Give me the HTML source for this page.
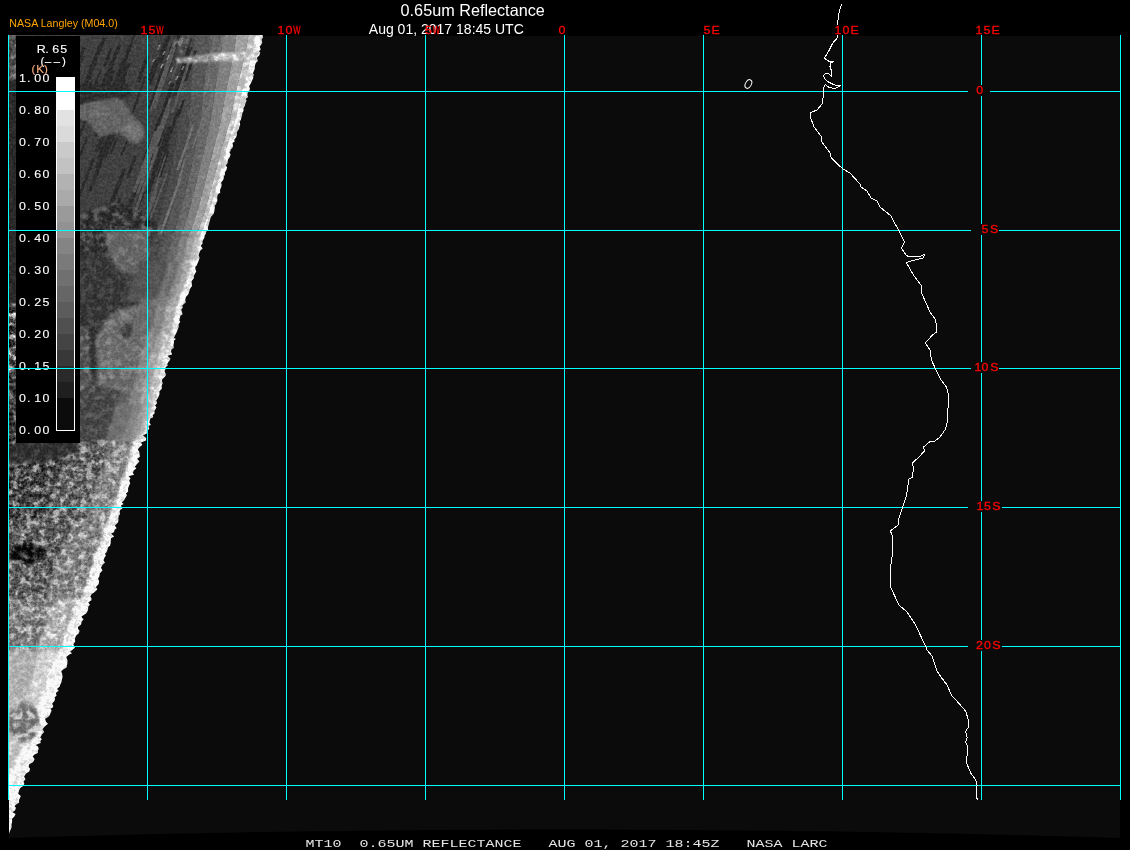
<!DOCTYPE html>
<html lang="en"><head><meta charset="utf-8"><title>0.65um Reflectance</title>
<style>
html,body{margin:0;padding:0;background:#000}
body{width:1130px;height:850px;overflow:hidden;position:relative}
svg{position:absolute;left:0;top:0;display:block}
.m{font-family:"Liberation Mono","DejaVu Sans Mono",monospace}
.s{font-family:"Liberation Sans",Arial,sans-serif}
text{filter:url(#gaa)}
</style></head><body>
<svg width="1130" height="850" viewBox="0 0 1130 850">
<g>
<rect width="1130" height="850" fill="#000"/>
<path d="M9.0 36.0 L1120.0 36.0 L1120.0 838.0 L1080.0 836.8 L1040.0 835.7 L1000.0 834.7 L960.0 833.8 L920.0 833.0 L880.0 832.2 L840.0 831.6 L800.0 831.0 L760.0 830.5 L720.0 830.2 L680.0 829.9 L640.0 829.7 L600.0 829.5 L560.0 829.5 L520.0 829.6 L480.0 829.7 L440.0 829.9 L400.0 830.2 L360.0 830.7 L320.0 831.2 L280.0 831.7 L240.0 832.4 L200.0 833.2 L160.0 834.0 L120.0 834.9 L80.0 836.0 L40.0 837.1 L9.0 838.0Z" fill="#0b0b0b"/>
<defs>
<filter id="gaa" x="-5%" y="-50%" width="110%" height="200%"><feOffset dx="0" dy="0"/></filter>
<clipPath id="bc"><path d="M9.0 35.0 L262.6 35.0 L263.0 37.6 L261.7 39.7 L262.3 42.5 L261.1 44.7 L259.7 46.4 L260.4 48.4 L260.6 49.7 L259.0 51.4 L260.3 52.6 L259.4 55.3 L257.0 57.8 L257.4 59.6 L258.0 61.0 L255.8 63.0 L254.9 65.8 L254.7 68.9 L253.8 71.2 L252.9 73.3 L253.9 74.6 L253.3 76.3 L253.2 77.9 L251.9 80.9 L250.8 83.6 L249.1 86.3 L249.9 88.4 L249.7 90.0 L247.8 93.0 L247.4 94.9 L248.1 96.9 L245.5 98.9 L246.6 100.3 L245.4 103.5 L244.9 105.6 L243.5 108.3 L243.6 110.8 L242.2 113.2 L242.2 114.7 L241.4 117.8 L240.7 120.2 L239.7 121.6 L240.2 124.4 L239.4 126.4 L239.0 128.9 L236.9 132.0 L237.0 135.2 L236.0 137.6 L234.2 139.8 L234.7 141.5 L232.5 143.0 L233.0 145.8 L232.4 148.0 L230.8 149.3 L230.6 151.1 L229.4 152.6 L230.6 154.5 L229.5 157.6 L227.9 159.8 L227.6 162.9 L225.8 165.6 L227.1 167.2 L226.4 170.0 L224.8 172.4 L225.0 174.8 L223.9 176.6 L223.9 178.3 L223.4 179.6 L221.1 182.7 L221.8 185.0 L220.9 187.9 L220.0 189.7 L220.2 192.8 L218.1 194.2 L217.5 195.6 L217.2 197.7 L217.4 200.7 L216.7 202.1 L216.1 204.0 L214.9 205.6 L214.9 207.2 L214.5 209.8 L214.4 211.1 L213.5 214.0 L211.0 216.8 L210.3 218.9 L209.6 221.7 L208.9 224.3 L208.1 226.9 L207.8 228.2 L208.3 230.0 L206.2 231.8 L205.7 234.1 L204.6 235.5 L204.4 237.7 L202.6 240.8 L202.6 243.4 L200.7 245.7 L202.7 248.6 L200.4 250.5 L199.0 253.7 L198.5 255.0 L199.7 257.9 L198.8 259.9 L198.5 261.2 L197.6 263.3 L196.8 265.3 L195.3 266.9 L195.4 269.0 L196.3 271.6 L194.6 274.2 L193.9 275.9 L194.0 278.1 L191.5 281.2 L191.8 283.4 L192.0 286.0 L190.1 288.8 L189.2 291.5 L188.2 294.4 L185.9 297.0 L185.3 300.0 L185.7 302.4 L182.3 305.6 L182.8 307.4 L181.2 309.7 L182.2 312.8 L182.5 314.2 L180.4 315.8 L179.7 318.4 L179.3 320.2 L180.3 321.8 L178.6 324.2 L178.6 327.2 L177.6 329.7 L177.0 331.6 L175.5 334.8 L174.0 337.8 L175.9 339.1 L173.7 340.8 L174.1 342.2 L173.4 345.2 L173.8 347.9 L171.6 349.2 L171.0 351.5 L172.1 354.4 L167.4 355.7 L170.4 358.4 L170.1 359.7 L168.4 362.1 L167.2 364.0 L167.7 365.8 L165.7 367.1 L165.3 369.7 L164.5 371.0 L165.5 373.6 L166.0 375.0 L164.7 377.0 L162.3 379.2 L161.8 380.9 L162.8 383.1 L161.7 385.8 L161.8 388.7 L159.4 391.2 L159.5 394.2 L158.2 397.4 L156.3 400.4 L157.2 402.9 L155.1 405.4 L156.5 407.6 L154.5 410.8 L154.6 413.5 L152.7 414.9 L153.2 417.2 L150.4 418.6 L149.7 421.0 L149.4 422.6 L150.9 424.8 L148.5 426.3 L149.3 428.8 L147.0 431.3 L147.0 433.2 L143.0 435.5 L146.2 437.9 L146.0 440.5 L141.0 442.5 L142.4 444.9 L140.2 446.5 L137.8 449.3 L139.4 452.2 L139.5 454.1 L140.0 456.7 L137.1 458.7 L139.4 461.5 L136.6 464.4 L134.8 466.8 L136.4 468.6 L133.9 470.2 L132.9 472.8 L134.0 474.7 L128.5 476.3 L130.5 478.3 L129.2 480.8 L130.2 483.2 L128.8 486.3 L128.0 488.8 L128.2 491.5 L125.8 493.7 L127.1 495.0 L126.2 496.6 L125.3 498.0 L123.6 500.8 L121.8 502.4 L123.7 503.9 L120.9 505.6 L121.6 507.0 L122.4 508.6 L120.1 510.0 L119.6 511.4 L120.1 514.2 L118.9 515.4 L118.3 518.4 L118.6 519.7 L118.0 522.5 L114.9 525.5 L116.7 528.3 L114.6 529.8 L114.0 532.3 L111.0 533.6 L114.2 536.4 L111.0 538.2 L110.8 540.3 L110.7 543.2 L110.0 545.7 L107.9 547.6 L107.6 549.4 L106.4 552.4 L104.9 553.7 L105.9 555.6 L104.3 558.1 L103.5 560.3 L104.9 562.7 L102.4 564.9 L101.0 567.8 L102.5 570.5 L99.7 573.5 L99.6 575.3 L99.1 576.9 L98.0 578.6 L99.1 581.0 L98.7 584.0 L96.0 587.1 L97.3 589.4 L95.2 591.4 L93.4 592.9 L91.7 594.1 L90.3 596.8 L91.5 598.3 L91.4 600.3 L88.4 602.3 L89.9 604.9 L88.3 606.6 L88.1 609.2 L87.6 611.1 L86.1 613.6 L81.5 616.4 L82.2 617.9 L83.6 619.2 L81.7 621.5 L81.1 624.4 L78.0 627.1 L78.1 628.9 L79.7 630.9 L78.6 633.6 L76.2 635.5 L74.9 638.4 L75.2 641.4 L73.3 644.2 L75.0 647.4 L73.7 648.7 L70.1 651.8 L72.1 653.2 L69.4 654.5 L66.2 656.9 L67.4 660.1 L67.4 662.0 L67.3 664.1 L66.7 665.9 L66.8 667.2 L63.6 669.2 L61.3 671.1 L61.6 672.4 L62.2 674.1 L62.6 677.0 L61.9 679.7 L61.4 682.2 L60.1 684.9 L59.7 686.6 L57.0 688.9 L58.7 690.6 L55.9 692.9 L56.6 695.8 L54.6 697.2 L55.1 698.8 L54.4 701.1 L52.1 703.8 L53.3 705.9 L52.7 707.6 L50.6 708.8 L51.6 710.4 L50.4 713.5 L49.5 715.6 L48.2 717.0 L45.0 718.8 L46.2 722.0 L48.0 723.8 L44.7 726.6 L42.6 729.2 L44.2 732.1 L41.9 734.5 L40.2 737.4 L41.9 738.9 L40.3 741.0 L40.7 742.9 L35.6 745.1 L38.0 746.6 L38.8 748.9 L37.9 750.2 L37.8 752.9 L34.5 754.6 L32.7 756.5 L34.6 759.0 L33.2 762.0 L29.0 764.4 L28.7 767.1 L30.1 768.8 L29.3 771.6 L26.0 773.5 L24.1 776.5 L25.5 779.3 L23.5 781.4 L24.4 783.9 L23.1 786.1 L20.2 787.9 L19.0 790.7 L18.2 793.8 L20.8 796.0 L19.9 798.2 L19.1 799.7 L19.0 802.8 L15.4 804.9 L14.6 806.5 L16.0 807.8 L15.0 810.4 L12.5 812.2 L15.6 813.9 L14.4 816.5 L12.1 818.7 L12.1 820.6 L12.1 821.9 L11.4 825.0 L11.7 826.9 L10.4 829.9 L9.5 832.3 L9.0 834.0Z"/></clipPath>
<filter id="tex" x="0" y="30" width="280" height="815" filterUnits="userSpaceOnUse" color-interpolation-filters="sRGB">
<feGaussianBlur in="SourceGraphic" stdDeviation="0.5" result="sg"/>
<feColorMatrix in="sg" type="matrix" values="1 0 0 0 0 1 0 0 0 0 1 0 0 0 0 0 0 0 0 1" result="base"/>
<feColorMatrix in="sg" type="matrix" values="0 1 0 0 0 0 1 0 0 0 0 1 0 0 0 0 0 0 0 1" result="amp"/>
<feTurbulence type="fractalNoise" baseFrequency="0.15" numOctaves="4" seed="5" result="tn"/>
<feColorMatrix in="tn" type="matrix" values="2.4 0 0 0 -0.7 2.4 0 0 0 -0.7 2.4 0 0 0 -0.7 0 0 0 0 1" result="N0"/>
<feComponentTransfer in="N0" result="N"><feFuncR type="gamma" exponent="1.8"/><feFuncG type="gamma" exponent="1.8"/><feFuncB type="gamma" exponent="1.8"/></feComponentTransfer>
<feComposite in="amp" in2="N" operator="arithmetic" k1="1" k2="0" k3="0" k4="0" result="T"/>
<feComposite in="T" in2="amp" operator="arithmetic" k1="0" k2="1" k3="-0.35" k4="0.5" result="X"/>
<feComposite in="base" in2="X" operator="arithmetic" k1="0" k2="1" k3="1.0" k4="-0.5" result="R"/>
<feColorMatrix in="sg" type="matrix" values="0 0 1 0 0 0 0 1 0 0 0 0 1 0 0 0 0 0 0 1" result="amp2"/>
<feTurbulence type="fractalNoise" baseFrequency="0.38" numOctaves="2" seed="11" result="tn2"/>
<feColorMatrix in="tn2" type="matrix" values="3 0 0 0 -1 3 0 0 0 -1 3 0 0 0 -1 0 0 0 0 1" result="N2"/>
<feComposite in="amp2" in2="N2" operator="arithmetic" k1="1" k2="0" k3="0" k4="0" result="T2"/>
<feComposite in="T2" in2="amp2" operator="arithmetic" k1="0" k2="1" k3="-0.5" k4="0.5" result="X2"/>
<feComposite in="R" in2="X2" operator="arithmetic" k1="0" k2="1" k3="0.6" k4="-0.3" result="R2"/>
<feComponentTransfer in="R2"><feFuncR type="discrete" tableValues="0.021 0.062 0.104 0.146 0.188 0.229 0.271 0.312 0.354 0.396 0.438 0.479 0.521 0.562 0.604 0.646 0.688 0.729 0.771 0.812 0.854 0.896 0.938 0.979"/><feFuncG type="discrete" tableValues="0.021 0.062 0.104 0.146 0.188 0.229 0.271 0.312 0.354 0.396 0.438 0.479 0.521 0.562 0.604 0.646 0.688 0.729 0.771 0.812 0.854 0.896 0.938 0.979"/><feFuncB type="discrete" tableValues="0.021 0.062 0.104 0.146 0.188 0.229 0.271 0.312 0.354 0.396 0.438 0.479 0.521 0.562 0.604 0.646 0.688 0.729 0.771 0.812 0.854 0.896 0.938 0.979"/></feComponentTransfer>
</filter>
<filter id="b1" x="0" y="30" width="280" height="450" filterUnits="userSpaceOnUse" color-interpolation-filters="sRGB"><feGaussianBlur stdDeviation="1.1"/></filter>
<filter id="b3" x="0" y="200" width="280" height="650" filterUnits="userSpaceOnUse" color-interpolation-filters="sRGB"><feGaussianBlur stdDeviation="1.4"/></filter>
</defs>
<g clip-path="url(#bc)"><g filter="url(#tex)">
<rect x="0" y="30" width="280" height="815" fill="rgb(64,5,30)"/>
<path d="M179.3 30.0 L179.4 35.0 L179.7 55.0 L179.5 60.0 L178.3 90.0 L178.3 91.0 L178.0 120.0 L175.3 150.0 L166.9 190.0 L162.3 210.0 L156.7 230.0 L154.2 234.0 L152.4 245.0 L0.0 245.0 L0.0 234.0 L0.0 230.0 L0.0 210.0 L0.0 190.0 L0.0 150.0 L0.0 120.0 L0.0 91.0 L0.0 90.0 L0.0 60.0 L0.0 55.0 L0.0 35.0 L0.0 30.0Z" fill="rgb(64,5,30)"/>
<path d="M194.5 30.0 L194.4 35.0 L193.8 55.0 L193.4 60.0 L191.0 90.0 L190.9 91.0 L189.3 120.0 L185.3 150.0 L176.4 190.0 L171.7 210.0 L165.8 230.0 L163.3 234.0 L161.4 245.0 L152.4 245.0 L154.2 234.0 L156.7 230.0 L162.3 210.0 L166.9 190.0 L175.3 150.0 L178.0 120.0 L178.3 91.0 L178.3 90.0 L179.5 60.0 L179.7 55.0 L179.4 35.0 L179.3 30.0Z" fill="rgb(74,5,30)"/>
<path d="M209.8 30.0 L209.4 35.0 L208.0 55.0 L207.4 60.0 L203.6 90.0 L203.5 91.0 L200.7 120.0 L195.3 150.0 L186.0 190.0 L181.0 210.0 L174.9 230.0 L172.4 234.0 L170.3 245.0 L161.4 245.0 L163.3 234.0 L165.8 230.0 L171.7 210.0 L176.4 190.0 L185.3 150.0 L189.3 120.0 L190.9 91.0 L191.0 90.0 L193.4 60.0 L193.8 55.0 L194.4 35.0 L194.5 30.0Z" fill="rgb(86,5,30)"/>
<path d="M223.5 30.0 L223.0 35.0 L220.8 55.0 L219.9 60.0 L215.0 90.0 L214.8 91.0 L210.8 120.0 L204.3 150.0 L194.6 190.0 L189.4 210.0 L183.1 230.0 L180.5 234.0 L178.4 245.0 L170.3 245.0 L172.4 234.0 L174.9 230.0 L181.0 210.0 L186.0 190.0 L195.3 150.0 L200.7 120.0 L203.5 91.0 L203.6 90.0 L207.4 60.0 L208.0 55.0 L209.4 35.0 L209.8 30.0Z" fill="rgb(104,7,30)"/>
<path d="M237.3 30.0 L236.5 35.0 L233.5 55.0 L232.5 60.0 L226.3 90.0 L226.1 91.0 L221.0 120.0 L213.3 150.0 L203.2 190.0 L197.8 210.0 L191.3 230.0 L188.7 234.0 L186.4 245.0 L178.4 245.0 L180.5 234.0 L183.1 230.0 L189.4 210.0 L194.6 190.0 L204.3 150.0 L210.8 120.0 L214.8 91.0 L215.0 90.0 L219.9 60.0 L220.8 55.0 L223.0 35.0 L223.5 30.0Z" fill="rgb(128,7,30)"/>
<path d="M249.5 30.0 L248.6 35.0 L244.8 55.0 L243.6 60.0 L236.5 90.0 L236.2 91.0 L230.1 120.0 L221.3 150.0 L210.8 190.0 L205.3 210.0 L198.6 230.0 L195.9 234.0 L193.6 245.0 L186.4 245.0 L188.7 234.0 L191.3 230.0 L197.8 210.0 L203.2 190.0 L213.3 150.0 L221.0 120.0 L226.1 91.0 L226.3 90.0 L232.5 60.0 L233.5 55.0 L236.5 35.0 L237.3 30.0Z" fill="rgb(160,15,30)"/>
<path d="M258.6 30.0 L257.6 35.0 L253.3 55.0 L252.0 60.0 L244.0 90.0 L243.8 91.0 L236.9 120.0 L227.3 150.0 L216.6 190.0 L210.9 210.0 L204.1 230.0 L201.4 234.0 L198.9 245.0 L193.6 245.0 L195.9 234.0 L198.6 230.0 L205.3 210.0 L210.8 190.0 L221.3 150.0 L230.1 120.0 L236.2 91.0 L236.5 90.0 L243.6 60.0 L244.8 55.0 L248.6 35.0 L249.5 30.0Z" fill="rgb(196,51,30)"/>
<path d="M267.8 30.0 L266.6 35.0 L262.0 55.0 L260.6 60.0 L252.1 90.0 L251.8 91.0 L244.4 120.0 L234.3 150.0 L223.4 190.0 L217.6 210.0 L210.7 230.0 L208.0 234.0 L205.5 245.0 L198.1 245.0 L200.5 234.0 L203.1 230.0 L209.9 210.0 L215.6 190.0 L226.3 150.0 L235.7 120.0 L242.5 91.0 L242.8 90.0 L250.6 60.0 L251.9 55.0 L256.1 35.0 L257.1 30.0Z" fill="rgb(255,153,30)"/>
<path d="M101.4 96.4 L103.6 96.4 L95.6 118.3 L93.4 118.3Z" fill="rgb(44,5,30)"/>
<path d="M163.4 139.9 L166.7 139.9 L156.2 170.1 L152.9 170.1Z" fill="rgb(44,5,30)"/>
<path d="M190.2 37.7 L192.4 37.7 L182.2 70.6 L180.0 70.6Z" fill="rgb(44,5,30)"/>
<path d="M162.6 117.0 L165.1 117.0 L147.2 165.3 L144.7 165.3Z" fill="rgb(44,5,30)"/>
<path d="M92.2 158.6 L95.2 158.6 L74.9 211.6 L71.9 211.6Z" fill="rgb(44,5,30)"/>
<path d="M154.8 59.6 L158.9 59.6 L151.5 80.2 L147.4 80.2Z" fill="rgb(44,5,30)"/>
<path d="M111.1 67.0 L114.0 67.0 L99.3 105.7 L96.3 105.7Z" fill="rgb(44,5,30)"/>
<path d="M162.4 142.3 L164.9 142.3 L158.4 160.7 L155.9 160.7Z" fill="rgb(44,5,30)"/>
<path d="M122.4 169.5 L125.9 169.5 L114.2 202.2 L110.8 202.2Z" fill="rgb(44,5,30)"/>
<path d="M121.7 80.0 L125.9 80.0 L112.1 118.4 L107.9 118.4Z" fill="rgb(44,5,30)"/>
<path d="M159.3 115.7 L162.6 115.7 L145.5 161.2 L142.2 161.2Z" fill="rgb(44,5,30)"/>
<path d="M102.6 38.0 L106.0 38.0 L89.9 80.1 L86.5 80.1Z" fill="rgb(44,5,30)"/>
<path d="M167.3 127.2 L171.1 127.2 L156.0 169.1 L152.2 169.1Z" fill="rgb(44,5,30)"/>
<path d="M177.3 109.1 L180.5 109.1 L165.2 151.2 L162.0 151.2Z" fill="rgb(44,5,30)"/>
<path d="M184.9 64.4 L188.8 64.4 L181.9 85.0 L178.0 85.0Z" fill="rgb(44,5,30)"/>
<path d="M145.3 56.5 L149.5 56.5 L140.0 82.2 L135.9 82.2Z" fill="rgb(44,5,30)"/>
<path d="M127.7 46.5 L131.9 46.5 L119.5 80.0 L115.3 80.0Z" fill="rgb(44,5,30)"/>
<path d="M119.0 198.0 L122.1 198.0 L102.7 246.0 L99.6 246.0Z" fill="rgb(44,5,30)"/>
<path d="M162.4 66.1 L165.7 66.1 L156.8 91.2 L153.6 91.2Z" fill="rgb(44,5,30)"/>
<path d="M166.6 150.8 L169.6 150.8 L161.2 177.0 L158.2 177.0Z" fill="rgb(44,5,30)"/>
<path d="M86.9 135.7 L89.1 135.7 L72.7 175.8 L70.6 175.8Z" fill="rgb(44,5,30)"/>
<path d="M166.8 110.4 L170.4 110.4 L158.7 142.0 L155.1 142.0Z" fill="rgb(44,5,30)"/>
<path d="M171.5 42.8 L173.9 42.8 L168.0 61.4 L165.6 61.4Z" fill="rgb(44,5,30)"/>
<path d="M182.5 99.7 L184.9 99.7 L179.5 117.8 L177.1 117.8Z" fill="rgb(44,5,30)"/>
<path d="M192.8 50.8 L196.9 50.8 L187.1 81.0 L182.9 81.0Z" fill="rgb(44,5,30)"/>
<path d="M133.9 155.9 L136.8 155.9 L129.3 177.7 L126.4 177.7Z" fill="rgb(44,5,30)"/>
<path d="M164.7 125.5 L167.0 125.5 L153.9 160.4 L151.7 160.4Z" fill="rgb(44,5,30)"/>
<path d="M78.0 100.2 L80.4 100.2 L69.8 126.6 L67.4 126.6Z" fill="rgb(44,5,30)"/>
<path d="M133.1 34.7 L135.5 34.7 L116.3 87.8 L113.9 87.8Z" fill="rgb(44,5,30)"/>
<path d="M103.7 141.4 L108.1 141.4 L101.2 158.4 L96.8 158.4Z" fill="rgb(44,5,30)"/>
<path d="M118.6 207.0 L121.5 207.0 L105.5 246.0 L102.6 246.0Z" fill="rgb(44,5,30)"/>
<path d="M125.3 64.2 L129.2 64.2 L112.2 110.3 L108.2 110.3Z" fill="rgb(44,5,30)"/>
<path d="M80.9 97.6 L85.3 97.6 L75.8 122.3 L71.3 122.3Z" fill="rgb(44,5,30)"/>
<path d="M144.1 76.5 L146.2 76.5 L133.6 112.7 L131.5 112.7Z" fill="rgb(44,5,30)"/>
<path d="M166.8 35.7 L170.5 35.7 L162.0 62.6 L158.2 62.6Z" fill="rgb(44,5,30)"/>
<path d="M117.4 225.8 L119.9 225.8 L111.7 246.0 L109.1 246.0Z" fill="rgb(44,5,30)"/>
<path d="M112.0 70.3 L116.3 70.3 L107.0 94.3 L102.8 94.3Z" fill="rgb(44,5,30)"/>
<path d="M82.1 47.4 L86.1 47.4 L69.1 89.1 L65.1 89.1Z" fill="rgb(44,5,30)"/>
<path d="M135.6 183.8 L139.6 183.8 L126.9 218.4 L123.0 218.4Z" fill="rgb(44,5,30)"/>
<path d="M88.0 112.3 L90.5 112.3 L68.1 165.2 L65.7 165.2Z" fill="rgb(44,5,30)"/>
<path d="M80.7 56.0 L84.7 56.0 L75.6 77.9 L71.6 77.9Z" fill="rgb(44,5,30)"/>
<path d="M165.5 101.8 L167.6 101.8 L154.2 139.2 L152.2 139.2Z" fill="rgb(44,5,30)"/>
<path d="M157.1 81.6 L160.6 81.6 L151.4 109.1 L147.9 109.1Z" fill="rgb(44,5,30)"/>
<path d="M170.5 83.2 L174.8 83.2 L164.4 115.5 L160.1 115.5Z" fill="rgb(44,5,30)"/>
<path d="M108.4 102.5 L112.6 102.5 L99.1 136.4 L94.9 136.4Z" fill="rgb(44,5,30)"/>
<path d="M115.2 116.2 L118.5 116.2 L97.6 168.0 L94.2 168.0Z" fill="rgb(44,5,30)"/>
<path d="M116.1 137.3 L118.6 137.3 L111.7 154.0 L109.2 154.0Z" fill="rgb(44,5,30)"/>
<path d="M178.8 30.8 L182.0 30.8 L166.9 78.0 L163.7 78.0Z" fill="rgb(44,5,30)"/>
<path d="M118.4 178.7 L121.7 178.7 L107.7 216.4 L104.4 216.4Z" fill="rgb(44,5,30)"/>
<path d="M156.0 143.9 L159.4 143.9 L143.6 190.5 L140.2 190.5Z" fill="rgb(44,5,30)"/>
<path d="M90.3 80.9 L93.6 80.9 L83.3 107.7 L80.0 107.7Z" fill="rgb(44,5,30)"/>
<path d="M101.3 155.6 L105.0 155.6 L91.8 191.3 L88.1 191.3Z" fill="rgb(44,5,30)"/>
<path d="M116.2 122.7 L120.6 122.7 L105.4 159.5 L101.0 159.5Z" fill="rgb(44,5,30)"/>
<path d="M185.9 54.9 L188.5 54.9 L177.2 88.2 L174.6 88.2Z" fill="rgb(44,5,30)"/>
<path d="M98.5 45.0 L102.8 45.0 L86.2 87.1 L82.0 87.1Z" fill="rgb(44,5,30)"/>
<path d="M109.9 61.7 L112.3 61.7 L95.4 105.6 L93.0 105.6Z" fill="rgb(44,5,30)"/>
<path d="M122.6 211.0 L127.0 211.0 L112.6 246.0 L108.2 246.0Z" fill="rgb(44,5,30)"/>
<path d="M127.7 63.1 L130.6 63.1 L118.2 95.9 L115.4 95.9Z" fill="rgb(44,5,30)"/>
<path d="M99.7 70.1 L101.8 70.1 L90.6 98.6 L88.6 98.6Z" fill="rgb(44,5,30)"/>
<path d="M167.2 143.6 L170.0 143.6 L158.9 176.8 L156.1 176.8Z" fill="rgb(44,5,30)"/>
<path d="M157.0 157.9 L161.5 157.9 L149.7 193.9 L145.2 193.9Z" fill="rgb(44,5,30)"/>
<path d="M142.7 191.6 L145.4 191.6 L124.8 245.5 L122.1 245.5Z" fill="rgb(44,5,30)"/>
<path d="M164.8 38.1 L167.1 38.1 L151.5 84.5 L149.2 84.5Z" fill="rgb(44,5,30)"/>
<path d="M121.5 60.6 L125.3 60.6 L105.9 112.5 L102.1 112.5Z" fill="rgb(44,5,30)"/>
<path d="M109.8 48.3 L112.9 48.3 L106.0 66.6 L102.9 66.6Z" fill="rgb(44,5,30)"/>
<path d="M117.4 44.8 L121.4 44.8 L101.5 97.4 L97.5 97.4Z" fill="rgb(44,5,30)"/>
<path d="M188.4 47.2 L192.6 47.2 L176.5 96.6 L172.3 96.6Z" fill="rgb(44,5,30)"/>
<path d="M106.7 123.0 L111.0 123.0 L98.4 152.3 L94.1 152.3Z" fill="rgb(44,5,30)"/>
<path d="M120.1 84.9 L122.7 84.9 L115.1 106.0 L112.5 106.0Z" fill="rgb(44,5,30)"/>
<path d="M189.2 52.4 L191.7 52.4 L184.4 74.7 L181.9 74.7Z" fill="rgb(44,5,30)"/>
<path d="M88.3 94.0 L91.1 94.0 L80.5 121.9 L77.7 121.9Z" fill="rgb(44,5,30)"/>
<path d="M129.5 132.5 L131.5 132.5 L122.3 155.5 L120.2 155.5Z" fill="rgb(44,5,30)"/>
<path d="M95.2 81.3 L98.5 81.3 L92.1 97.9 L88.7 97.9Z" fill="rgb(44,5,30)"/>
<path d="M164.2 67.9 L165.9 67.9 L151.1 111.6 L149.4 111.6Z" fill="rgb(88,7,30)"/>
<path d="M154.1 193.8 L157.3 193.8 L140.6 235.4 L137.4 235.4Z" fill="rgb(88,7,30)"/>
<path d="M167.7 108.6 L171.2 108.6 L154.5 154.0 L151.0 154.0Z" fill="rgb(88,7,30)"/>
<path d="M169.2 98.5 L172.0 98.5 L150.0 160.2 L147.2 160.2Z" fill="rgb(88,7,30)"/>
<path d="M204.5 110.9 L206.3 110.9 L193.3 148.3 L191.6 148.3Z" fill="rgb(112,7,30)"/>
<path d="M210.4 44.1 L212.2 44.1 L194.8 101.2 L192.9 101.2Z" fill="rgb(88,7,30)"/>
<path d="M173.5 46.9 L176.3 46.9 L155.6 109.0 L152.8 109.0Z" fill="rgb(88,7,30)"/>
<path d="M196.8 86.4 L199.2 86.4 L189.6 118.5 L187.2 118.5Z" fill="rgb(88,7,30)"/>
<path d="M205.6 61.5 L209.0 61.5 L195.8 103.8 L192.4 103.8Z" fill="rgb(88,7,30)"/>
<path d="M159.2 224.5 L162.6 224.5 L154.5 246.0 L151.1 246.0Z" fill="rgb(88,7,30)"/>
<path d="M212.5 91.9 L214.8 91.9 L203.3 129.7 L201.0 129.7Z" fill="rgb(112,7,30)"/>
<path d="M191.9 124.9 L194.4 124.9 L178.9 170.1 L176.4 170.1Z" fill="rgb(112,7,30)"/>
<path d="M223.2 31.0 L225.5 31.0 L216.4 64.2 L214.1 64.2Z" fill="rgb(112,7,30)"/>
<path d="M208.9 38.3 L210.8 38.3 L204.9 59.5 L202.9 59.5Z" fill="rgb(88,7,30)"/>
<path d="M152.0 147.1 L154.8 147.1 L139.1 193.6 L136.3 193.6Z" fill="rgb(88,7,30)"/>
<path d="M166.0 173.2 L168.1 173.2 L144.6 237.2 L142.5 237.2Z" fill="rgb(88,7,30)"/>
<path d="M130.0 226.9 L132.8 226.9 L125.2 246.0 L122.4 246.0Z" fill="rgb(88,7,30)"/>
<path d="M174.1 38.8 L176.9 38.8 L156.4 100.5 L153.6 100.5Z" fill="rgb(88,7,30)"/>
<path d="M179.8 176.8 L182.3 176.8 L160.6 237.4 L158.0 237.4Z" fill="rgb(112,7,30)"/>
<path d="M154.3 130.9 L157.4 130.9 L135.5 192.6 L132.3 192.6Z" fill="rgb(88,7,30)"/>
<path d="M156.1 146.8 L159.0 146.8 L137.0 211.5 L134.1 211.5Z" fill="rgb(88,7,30)"/>
<path d="M209.2 76.0 L211.4 76.0 L204.8 97.5 L202.6 97.5Z" fill="rgb(112,7,30)"/>
<path d="M191.0 51.0 L193.7 51.0 L173.9 112.8 L171.1 112.8Z" fill="rgb(88,7,30)"/>
<path d="M165.0 155.2 L166.5 155.2 L148.8 209.3 L147.3 209.3Z" fill="rgb(88,7,30)"/>
<path d="M154.9 189.5 L157.4 189.5 L136.4 246.0 L133.8 246.0Z" fill="rgb(88,7,30)"/>
<path d="M148.6 161.9 L150.6 161.9 L142.9 185.2 L140.9 185.2Z" fill="rgb(88,7,30)"/>
<path d="M182.3 44.9 L184.2 44.9 L173.3 78.2 L171.4 78.2Z" fill="rgb(88,7,30)"/>
<path d="M158.5 178.0 L160.8 178.0 L136.1 246.0 L133.8 246.0Z" fill="rgb(88,7,30)"/>
<path d="M158.2 125.8 L160.9 125.8 L141.3 180.0 L138.6 180.0Z" fill="rgb(88,7,30)"/>
<path d="M184.3 158.6 L186.3 158.6 L179.0 182.4 L177.0 182.4Z" fill="rgb(112,7,30)"/>
<g filter="url(#b1)">
<path d="M80.0 84.0 L128.0 84.0 L132.0 96.0 L120.0 99.0 L100.0 100.0 L80.0 106.0Z" fill="rgb(46,7,30)"/>
<path d="M78.0 105.0 L100.0 100.0 L118.0 98.0 L125.0 103.0 L132.0 115.0 L143.0 125.0 L145.0 137.0 L138.0 144.0 L128.0 141.0 L120.0 133.0 L108.0 134.0 L100.0 138.0 L95.0 130.0 L88.0 122.0 L78.0 118.0Z" fill="rgb(100,15,30)"/>
<ellipse cx="134.0" cy="131.0" rx="8.0" ry="10.0" fill="rgb(116,15,30)" transform="rotate(-30 134.0 131.0)"/>
<ellipse cx="100.0" cy="112.0" rx="12.0" ry="6.0" fill="rgb(108,15,30)" transform="rotate(-10 100.0 112.0)"/>
<path d="M176.0 58.5 L200.0 55.0 L235.0 52.0 L260.0 51.5 L258.0 60.5 L235.0 61.0 L205.0 62.0 L178.0 63.0Z" fill="rgb(160,76,30)"/>
<path d="M212.0 53.5 L260.0 51.5 L258.0 60.0 L215.0 60.5Z" fill="rgb(204,76,30)"/>
<path d="M176.0 40.0 L186.0 36.0 L192.0 36.0 L184.0 52.0 L178.0 58.0Z" fill="rgb(96,76,30)"/>
</g>
<path d="M157.0 50.0 l2 -5 l1.6 0 l-2 5Z" fill="rgb(132,76,30)"/>
<path d="M162.0 55.0 l2 -4 l1.6 0 l-2 4Z" fill="rgb(132,76,30)"/>
<path d="M166.0 60.0 l2 -5 l1.6 0 l-2 5Z" fill="rgb(132,76,30)"/>
<path d="M160.0 68.0 l2 -4 l1.6 0 l-2 4Z" fill="rgb(132,76,30)"/>
<path d="M170.0 72.0 l2 -5 l1.6 0 l-2 5Z" fill="rgb(132,76,30)"/>
<path d="M175.0 80.0 l2 -4 l1.6 0 l-2 4Z" fill="rgb(132,76,30)"/>
<path d="M168.0 84.0 l2 -3 l1.6 0 l-2 3Z" fill="rgb(132,76,30)"/>
<path d="M181.0 70.0 l2 -4 l1.6 0 l-2 4Z" fill="rgb(132,76,30)"/>
<path d="M152.0 62.0 l2 -3 l1.6 0 l-2 3Z" fill="rgb(132,76,30)"/>
<path d="M173.0 47.0 l2 -5 l1.6 0 l-2 5Z" fill="rgb(132,76,30)"/>
<path d="M180.0 44.0 l2 -4 l1.6 0 l-2 4Z" fill="rgb(132,76,30)"/>
<path d="M119.0 227.0 l2 -4 l1.6 0 l-2 4Z" fill="rgb(132,76,30)"/>
<path d="M124.0 222.0 l2 -3 l1.6 0 l-2 3Z" fill="rgb(132,76,30)"/>
<path d="M115.0 232.0 l2 -3 l1.6 0 l-2 3Z" fill="rgb(132,76,30)"/>
<g filter="url(#b3)">
<path d="M204.4 236.5 L201.4 250.0 L197.5 265.0 L193.5 280.0 L186.6 298.0 L182.0 312.0 L178.5 330.0 L175.7 340.0 L167.0 368.0 L158.2 400.0 L146.5 436.0 L143.2 443.5 L0.0 443.5 L0.0 436.0 L0.0 400.0 L0.0 368.0 L0.0 340.0 L0.0 330.0 L0.0 312.0 L0.0 298.0 L0.0 280.0 L0.0 265.0 L0.0 250.0 L0.0 236.5Z" fill="rgb(64,25,30)"/>
<path d="M80.0 214.0 L100.0 207.0 L118.0 202.0 L150.0 216.0 L160.0 232.0 L108.0 250.0 L80.0 250.0Z" fill="rgb(58,56,30)"/>
<path d="M104.0 231.0 L149.0 229.0 L150.0 271.0 L131.0 275.0 L117.0 268.0 L109.0 253.0Z" fill="rgb(104,30,30)"/>
<path d="M78.0 250.0 L104.0 250.0 L110.0 271.0 L122.0 284.0 L143.0 282.0 L148.0 304.0 L118.0 310.0 L104.0 324.0 L78.0 324.0Z" fill="rgb(58,25,30)"/>
<path d="M104.0 322.0 L118.0 309.0 L149.0 303.0 L152.0 388.0 L120.0 390.0 L97.0 386.0 L96.0 340.0Z" fill="rgb(112,35,30)"/>
<ellipse cx="127.0" cy="331.0" rx="7.0" ry="7.0" fill="rgb(68,30,30)"/>
<ellipse cx="86.0" cy="343.0" rx="5.0" ry="8.0" fill="rgb(120,204,30)"/>
<path d="M89.0 328.0 L95.0 328.0 L97.0 378.0 L91.0 376.0Z" fill="rgb(48,20,30)"/>
<path d="M78.0 330.0 L89.0 330.0 L91.0 378.0 L96.0 388.0 L78.0 392.0Z" fill="rgb(92,51,30)"/>
<path d="M78.0 390.0 L121.0 389.0 L112.0 443.0 L78.0 443.0Z" fill="rgb(74,30,30)"/>
<path d="M121.0 389.0 L150.0 386.0 L140.0 443.0 L110.0 443.0Z" fill="rgb(104,30,30)"/>
</g>
<g filter="url(#b1)">
<path d="M163.2 236.0 L160.0 250.0 L156.4 264.0 L147.4 264.0 L151.0 250.0 L154.2 236.0Z" fill="rgb(74,10,30)"/>
<path d="M172.2 236.0 L169.0 250.0 L165.4 264.0 L156.4 264.0 L160.0 250.0 L163.2 236.0Z" fill="rgb(86,10,30)"/>
<path d="M180.2 236.0 L177.1 250.0 L173.5 264.0 L165.4 264.0 L169.0 250.0 L172.2 236.0Z" fill="rgb(104,10,30)"/>
<path d="M188.4 236.0 L185.2 250.0 L181.6 264.0 L173.5 264.0 L177.1 250.0 L180.2 236.0Z" fill="rgb(128,10,30)"/>
<path d="M195.6 236.0 L192.4 250.0 L188.8 264.0 L181.6 264.0 L185.2 250.0 L188.4 236.0Z" fill="rgb(160,15,30)"/>
<path d="M201.0 236.0 L197.8 250.0 L194.2 264.0 L188.8 264.0 L192.4 250.0 L195.6 236.0Z" fill="rgb(196,51,30)"/>
<path d="M207.2 236.0 L204.1 250.0 L200.5 264.0 L193.3 264.0 L196.9 250.0 L200.1 236.0Z" fill="rgb(255,153,30)"/>
<path d="M170.7 260.5 L169.5 265.0 L165.5 280.0 L158.6 298.0 L157.4 301.5 L125.4 301.5 L126.6 298.0 L133.5 280.0 L137.5 265.0 L138.7 260.5Z" fill="rgb(84,10,19)"/>
<path d="M180.7 260.5 L179.5 265.0 L175.5 280.0 L168.6 298.0 L167.4 301.5 L155.4 301.5 L156.6 298.0 L163.5 280.0 L167.5 265.0 L168.7 260.5Z" fill="rgb(112,15,23)"/>
<path d="M186.7 260.5 L185.5 265.0 L181.5 280.0 L174.6 298.0 L173.4 301.5 L166.4 301.5 L167.6 298.0 L174.5 280.0 L178.5 265.0 L179.7 260.5Z" fill="rgb(140,20,27)"/>
<path d="M192.7 260.5 L191.5 265.0 L187.5 280.0 L180.6 298.0 L179.4 301.5 L172.4 301.5 L173.6 298.0 L180.5 280.0 L184.5 265.0 L185.7 260.5Z" fill="rgb(176,30,34)"/>
<path d="M202.7 260.5 L201.5 265.0 L197.5 280.0 L190.6 298.0 L189.4 301.5 L178.9 301.5 L180.1 298.0 L187.0 280.0 L191.0 265.0 L192.2 260.5Z" fill="rgb(244,76,66)"/>
<path d="M160.4 298.5 L156.0 312.0 L152.5 330.0 L150.7 336.5 L130.7 336.5 L132.5 330.0 L136.0 312.0 L140.4 298.5Z" fill="rgb(108,15,23)"/>
<path d="M170.4 298.5 L166.0 312.0 L162.5 330.0 L160.7 336.5 L149.7 336.5 L151.5 330.0 L155.0 312.0 L159.4 298.5Z" fill="rgb(132,20,27)"/>
<path d="M180.4 298.5 L176.0 312.0 L172.5 330.0 L170.7 336.5 L159.7 336.5 L161.5 330.0 L165.0 312.0 L169.4 298.5Z" fill="rgb(168,30,34)"/>
<path d="M190.4 298.5 L186.0 312.0 L182.5 330.0 L180.7 336.5 L170.2 336.5 L172.0 330.0 L175.5 312.0 L179.9 298.5Z" fill="rgb(244,76,66)"/>
<path d="M159.5 333.5 L157.7 340.0 L149.0 368.0 L147.5 373.5 L135.5 373.5 L137.0 368.0 L145.7 340.0 L147.5 333.5Z" fill="rgb(140,20,27)"/>
<path d="M167.5 333.5 L165.7 340.0 L157.0 368.0 L155.5 373.5 L145.5 373.5 L147.0 368.0 L155.7 340.0 L157.5 333.5Z" fill="rgb(168,30,34)"/>
<path d="M173.0 333.5 L171.2 340.0 L162.5 368.0 L161.0 373.5 L153.5 373.5 L155.0 368.0 L163.7 340.0 L165.5 333.5Z" fill="rgb(200,45,44)"/>
<path d="M181.5 333.5 L179.7 340.0 L171.0 368.0 L169.5 373.5 L160.0 373.5 L161.5 368.0 L170.2 340.0 L172.0 333.5Z" fill="rgb(244,76,66)"/>
<path d="M150.3 370.5 L142.2 400.0 L140.1 406.5 L128.1 406.5 L130.2 400.0 L138.3 370.5Z" fill="rgb(136,20,27)"/>
<path d="M157.3 370.5 L149.2 400.0 L147.1 406.5 L138.1 406.5 L140.2 400.0 L148.3 370.5Z" fill="rgb(164,30,34)"/>
<path d="M162.3 370.5 L154.2 400.0 L152.1 406.5 L145.1 406.5 L147.2 400.0 L155.3 370.5Z" fill="rgb(196,45,44)"/>
<path d="M170.3 370.5 L162.2 400.0 L160.1 406.5 L151.6 406.5 L153.7 400.0 L161.8 370.5Z" fill="rgb(244,76,66)"/>
<path d="M135.1 403.5 L124.5 436.0 L121.2 443.5 L103.2 443.5 L106.5 436.0 L117.1 403.5Z" fill="rgb(112,12,21)"/>
<path d="M143.1 403.5 L132.5 436.0 L129.2 443.5 L120.2 443.5 L123.5 436.0 L134.1 403.5Z" fill="rgb(132,15,23)"/>
<path d="M149.1 403.5 L138.5 436.0 L135.2 443.5 L128.2 443.5 L131.5 436.0 L142.1 403.5Z" fill="rgb(152,20,27)"/>
<path d="M154.1 403.5 L143.5 436.0 L140.2 443.5 L134.2 443.5 L137.5 436.0 L148.1 403.5Z" fill="rgb(180,30,34)"/>
<path d="M161.1 403.5 L150.5 436.0 L147.2 443.5 L139.7 443.5 L143.0 436.0 L153.6 403.5Z" fill="rgb(246,76,66)"/>
</g>
<g filter="url(#b3)">
<path d="M72.5 440.5 L68.3 450.0 L65.5 465.0 L60.0 480.0 L55.0 495.0 L50.5 507.0 L47.0 520.0 L45.8 523.5 L0.0 523.5 L0.0 520.0 L0.0 507.0 L0.0 495.0 L0.0 480.0 L0.0 465.0 L0.0 450.0 L0.0 440.5Z" fill="rgb(82,114,93)"/>
<path d="M112.5 440.5 L108.3 450.0 L105.5 465.0 L100.0 480.0 L95.0 495.0 L90.5 507.0 L87.0 520.0 L85.8 523.5 L41.8 523.5 L43.0 520.0 L46.5 507.0 L51.0 495.0 L56.0 480.0 L61.5 465.0 L64.3 450.0 L68.5 440.5Z" fill="rgb(108,102,84)"/>
<path d="M135.5 440.5 L131.3 450.0 L128.5 465.0 L123.0 480.0 L118.0 495.0 L113.5 507.0 L110.0 520.0 L108.8 523.5 L83.8 523.5 L85.0 520.0 L88.5 507.0 L93.0 495.0 L98.0 480.0 L103.5 465.0 L106.3 450.0 L110.5 440.5Z" fill="rgb(144,81,69)"/>
<path d="M148.5 440.5 L144.3 450.0 L141.5 465.0 L136.0 480.0 L131.0 495.0 L126.5 507.0 L123.0 520.0 L121.8 523.5 L107.8 523.5 L109.0 520.0 L112.5 507.0 L117.0 495.0 L122.0 480.0 L127.5 465.0 L130.3 450.0 L134.5 440.5Z" fill="rgb(255,89,75)"/>
<path d="M74.8 520.5 L71.7 530.0 L67.0 545.0 L61.5 556.0 L58.5 570.0 L53.2 585.0 L51.7 590.0 L46.6 601.5 L0.0 601.5 L0.0 590.0 L0.0 585.0 L0.0 570.0 L0.0 556.0 L0.0 545.0 L0.0 530.0 L0.0 520.5Z" fill="rgb(106,107,87)"/>
<path d="M108.8 520.5 L105.7 530.0 L101.0 545.0 L95.5 556.0 L92.5 570.0 L87.2 585.0 L85.7 590.0 L80.6 601.5 L44.6 601.5 L49.7 590.0 L51.2 585.0 L56.5 570.0 L59.5 556.0 L65.0 545.0 L69.7 530.0 L72.8 520.5Z" fill="rgb(140,86,73)"/>
<path d="M122.8 520.5 L119.7 530.0 L115.0 545.0 L109.5 556.0 L106.5 570.0 L101.2 585.0 L99.7 590.0 L94.6 601.5 L79.6 601.5 L84.7 590.0 L86.2 585.0 L91.5 570.0 L94.5 556.0 L100.0 545.0 L104.7 530.0 L107.8 520.5Z" fill="rgb(255,89,75)"/>
<path d="M57.9 598.5 L55.0 605.0 L48.5 620.0 L43.7 635.0 L40.6 646.0 L37.2 653.5 L0.0 653.5 L0.0 646.0 L0.0 635.0 L0.0 620.0 L0.0 605.0 L0.0 598.5Z" fill="rgb(136,89,75)"/>
<path d="M80.9 598.5 L78.0 605.0 L71.5 620.0 L66.7 635.0 L63.6 646.0 L60.2 653.5 L35.2 653.5 L38.6 646.0 L41.7 635.0 L46.5 620.0 L53.0 605.0 L55.9 598.5Z" fill="rgb(184,71,62)"/>
<path d="M95.9 598.5 L93.0 605.0 L86.5 620.0 L81.7 635.0 L78.6 646.0 L75.2 653.5 L59.2 653.5 L62.6 646.0 L65.7 635.0 L70.5 620.0 L77.0 605.0 L79.9 598.5Z" fill="rgb(255,89,75)"/>
<path d="M44.5 650.5 L40.2 660.0 L36.6 670.0 L32.0 685.0 L26.6 701.5 L0.0 701.5 L0.0 685.0 L0.0 670.0 L0.0 660.0 L0.0 650.5Z" fill="rgb(176,35,37)"/>
<path d="M59.5 650.5 L55.2 660.0 L51.6 670.0 L47.0 685.0 L41.6 701.5 L24.6 701.5 L30.0 685.0 L34.6 670.0 L38.2 660.0 L42.5 650.5Z" fill="rgb(212,40,41)"/>
<path d="M76.5 650.5 L72.2 660.0 L68.6 670.0 L64.0 685.0 L58.6 701.5 L40.6 701.5 L46.0 685.0 L50.6 670.0 L54.2 660.0 L58.5 650.5Z" fill="rgb(255,76,66)"/>
<path d="M40.6 698.5 L34.8 715.0 L30.6 730.0 L24.7 745.0 L18.4 760.0 L11.5 775.0 L7.8 785.0 L5.1 793.5 L0.0 793.5 L0.0 785.0 L0.0 775.0 L0.0 760.0 L0.0 745.0 L0.0 730.0 L0.0 715.0 L0.0 698.5Z" fill="rgb(196,35,37)"/>
<path d="M59.6 698.5 L53.8 715.0 L49.6 730.0 L43.7 745.0 L37.4 760.0 L30.5 775.0 L26.8 785.0 L24.1 793.5 L4.1 793.5 L6.8 785.0 L10.5 775.0 L17.4 760.0 L23.7 745.0 L29.6 730.0 L33.8 715.0 L39.6 698.5Z" fill="rgb(255,76,66)"/>
<path d="M25.0 790.5 L23.6 795.0 L21.0 805.0 L17.8 815.0 L16.2 823.0 L14.6 830.0 L13.3 834.0 L13.3 846.5 L0.0 846.5 L0.0 834.0 L0.0 830.0 L0.0 823.0 L0.0 815.0 L0.0 805.0 L0.0 795.0 L0.0 790.5Z" fill="rgb(255,76,66)"/>
<ellipse cx="26.0" cy="553.0" rx="19.0" ry="11.0" fill="rgb(38,102,30)"/>
<ellipse cx="24.0" cy="722.0" rx="16.0" ry="20.0" fill="rgb(140,102,30)"/>
<path d="M7.0 440.0 L78.0 440.0 L76.0 452.0 L58.0 460.0 L30.0 462.0 L7.0 466.0Z" fill="rgb(52,30,30)"/>
</g>
<g filter="url(#b1)">
<rect x="7" y="28" width="10" height="52" fill="rgb(88,76,51)"/>
<rect x="7" y="80" width="10" height="224" fill="rgb(42,10,30)"/>
<rect x="7" y="304" width="10" height="68" fill="rgb(92,178,102)"/>
<rect x="7" y="372" width="10" height="72" fill="rgb(70,102,76)"/>
</g>
</g></g>
<rect x="16" y="36" width="64" height="407" fill="#000"/>
<rect x="57" y="77" width="17" height="17" fill="#ffffff"/><rect x="57" y="94" width="17" height="16" fill="#ffffff"/><rect x="57" y="110" width="17" height="16" fill="#e2e2e2"/><rect x="57" y="126" width="17" height="16" fill="#dadada"/><rect x="57" y="142" width="17" height="16" fill="#cacaca"/><rect x="57" y="158" width="17" height="16" fill="#c2c2c2"/><rect x="57" y="174" width="17" height="16" fill="#b2b2b2"/><rect x="57" y="190" width="17" height="16" fill="#aaaaaa"/><rect x="57" y="206" width="17" height="16" fill="#9a9a9a"/><rect x="57" y="222" width="17" height="16" fill="#929292"/><rect x="57" y="238" width="17" height="16" fill="#848484"/><rect x="57" y="254" width="17" height="16" fill="#7a7a7a"/><rect x="57" y="270" width="17" height="16" fill="#707070"/><rect x="57" y="286" width="17" height="16" fill="#666666"/><rect x="57" y="302" width="17" height="16" fill="#5c5c5c"/><rect x="57" y="318" width="17" height="16" fill="#505050"/><rect x="57" y="334" width="17" height="16" fill="#444444"/><rect x="57" y="350" width="17" height="16" fill="#383838"/><rect x="57" y="366" width="17" height="16" fill="#2a2a2a"/><rect x="57" y="382" width="17" height="16" fill="#1f1f1f"/><rect x="57" y="398" width="17" height="16" fill="#0c0c0c"/><rect x="57" y="414" width="17" height="16" fill="#0c0c0c"/>
<rect x="56.5" y="77.5" width="18" height="353" fill="none" stroke="#fff" stroke-width="1" shape-rendering="crispEdges"/>
<text class="s" transform="translate(0 81.8) scale(1.10 1)" x="17.27 24.55 31.09 38.73" y="0" font-size="11.3" fill="#fff" stroke="#fff" stroke-width="0.12">1.00</text><text class="s" transform="translate(0 113.8) scale(1.10 1)" x="17.27 24.55 31.09 38.73" y="0" font-size="11.3" fill="#fff" stroke="#fff" stroke-width="0.12">0.80</text><text class="s" transform="translate(0 145.8) scale(1.10 1)" x="17.27 24.55 31.09 38.73" y="0" font-size="11.3" fill="#fff" stroke="#fff" stroke-width="0.12">0.70</text><text class="s" transform="translate(0 177.8) scale(1.10 1)" x="17.27 24.55 31.09 38.73" y="0" font-size="11.3" fill="#fff" stroke="#fff" stroke-width="0.12">0.60</text><text class="s" transform="translate(0 209.8) scale(1.10 1)" x="17.27 24.55 31.09 38.73" y="0" font-size="11.3" fill="#fff" stroke="#fff" stroke-width="0.12">0.50</text><text class="s" transform="translate(0 241.8) scale(1.10 1)" x="17.27 24.55 31.09 38.73" y="0" font-size="11.3" fill="#fff" stroke="#fff" stroke-width="0.12">0.40</text><text class="s" transform="translate(0 273.8) scale(1.10 1)" x="17.27 24.55 31.09 38.73" y="0" font-size="11.3" fill="#fff" stroke="#fff" stroke-width="0.12">0.30</text><text class="s" transform="translate(0 305.8) scale(1.10 1)" x="17.27 24.55 31.09 38.73" y="0" font-size="11.3" fill="#fff" stroke="#fff" stroke-width="0.12">0.25</text><text class="s" transform="translate(0 337.8) scale(1.10 1)" x="17.27 24.55 31.09 38.73" y="0" font-size="11.3" fill="#fff" stroke="#fff" stroke-width="0.12">0.20</text><text class="s" transform="translate(0 369.8) scale(1.10 1)" x="17.27 24.55 31.09 38.73" y="0" font-size="11.3" fill="#fff" stroke="#fff" stroke-width="0.12">0.15</text><text class="s" transform="translate(0 401.8) scale(1.10 1)" x="17.27 24.55 31.09 38.73" y="0" font-size="11.3" fill="#fff" stroke="#fff" stroke-width="0.12">0.10</text><text class="s" transform="translate(0 433.8) scale(1.10 1)" x="17.27 24.55 31.09 38.73" y="0" font-size="11.3" fill="#fff" stroke="#fff" stroke-width="0.12">0.00</text>
<text class="s" transform="translate(0 52.8) scale(1.10 1)" x="33.45 41.09 47.45 54.73" y="0" font-size="11.3" fill="#fff" stroke="#fff" stroke-width="0.12">R.65</text>
<text class="s" transform="translate(0 64.6) scale(1.10 1)" x="36.91" y="0" font-size="10.5" fill="#fff" stroke="#fff" stroke-width="0.12">(</text><text class="s" transform="translate(43.4 64.8) scale(2.6 1)" x="0 3.4" y="0" font-size="10.5" fill="#fff">--</text><text class="s" transform="translate(0 64.6) scale(1.10 1)" x="56.36" y="0" font-size="10.5" fill="#fff" stroke="#fff" stroke-width="0.12">)</text>
<text class="s" transform="translate(0 72.6) scale(1.10 1)" x="28.64 32.91 40.00" y="0" font-size="10.5" fill="#f6ad80" stroke="#f6ad80" stroke-width="0.12">(K)</text>
<g stroke="#00ffff" stroke-width="1" shape-rendering="crispEdges" fill="none">
<path d="M8.5 35V800"/><path d="M147.5 35V800"/><path d="M286.5 35V800"/><path d="M425.5 35V800"/><path d="M564.5 35V800"/><path d="M703.5 35V800"/><path d="M842.5 35V800"/><path d="M981.5 35V800"/><path d="M1120.5 35V800"/><path d="M8 91.5H1121"/><path d="M8 230.5H1121"/><path d="M8 368.5H1121"/><path d="M8 507.5H1121"/><path d="M8 646.5H1121"/><path d="M8 785.5H1121"/>
</g>
<g stroke="#fff" stroke-width="1" fill="none" stroke-linejoin="round" shape-rendering="crispEdges">
<path d="M841.9 4.2 L840.2 7.8 L838.8 14.1 L837.6 23.3 L837.6 36.0 L836.6 38.8 L832.8 43.0 L828.9 50.8 L824.4 58.2 L827.5 60.5 L830.6 62.1 L833.8 61.4 L830.6 63.3 L830.0 66.4 L831.4 70.6 L831.7 76.3 L828.9 73.7 L825.3 73.7 L823.2 75.6 L824.9 79.1 L828.9 82.3 L835.9 85.5 L840.6 85.5 L835.2 88.6 L828.9 87.3 L825.3 84.5 L823.2 88.3 L823.2 96.0 L822.6 101.0 L822.0 104.0 L817.0 110.0 L811.0 112.4 L810.0 116.0 L814.0 127.0 L821.0 136.0 L822.0 142.0 L830.0 153.0 L831.4 158.0 L842.4 168.6 L850.0 173.0 L860.0 184.0 L861.0 187.0 L867.0 191.0 L871.0 198.0 L877.0 201.0 L880.0 207.0 L891.0 216.0 L893.0 220.0 L899.0 231.0 L904.4 242.0 L901.4 248.0 L906.0 255.0 L909.0 257.0 L920.0 256.6 L924.4 254.4 L923.4 258.0 L912.0 260.8 L906.4 262.6 L914.0 276.0 L921.0 285.0 L921.6 293.0 L930.0 312.0 L935.0 319.0 L936.6 325.0 L937.0 332.0 L933.0 334.4 L925.4 343.0 L930.0 350.0 L931.4 360.0 L935.6 369.0 L941.0 380.0 L946.4 387.0 L949.0 397.0 L948.0 408.0 L947.6 420.0 L945.6 429.0 L940.0 437.0 L935.0 441.0 L930.0 441.6 L923.6 447.0 L924.4 451.0 L919.0 457.0 L912.4 463.0 L913.6 468.0 L912.4 477.0 L909.0 479.0 L906.4 496.0 L902.4 508.0 L898.4 520.0 L898.0 525.0 L890.4 531.0 L892.4 536.0 L893.0 550.0 L891.0 564.0 L890.2 578.0 L891.0 588.0 L899.0 605.0 L907.0 612.0 L915.0 624.0 L926.0 647.0 L927.0 650.0 L932.0 656.0 L937.0 671.0 L941.0 677.0 L947.0 685.0 L952.0 696.0 L956.0 700.0 L965.9 711.5 L968.7 721.4 L968.4 727.2 L965.6 731.3 L967.2 737.9 L965.6 742.0 L967.5 746.1 L967.5 755.2 L966.4 756.8 L966.7 763.4 L970.8 773.3 L975.5 779.4 L977.1 785.7 L976.3 790.6 L976.3 798.0 L977.8 799.3"/>
<ellipse cx="748.4" cy="84" rx="2.9" ry="4.6" transform="rotate(28 748.4 84)"/>
</g>
<rect x="968" y="85" width="22" height="11" fill="#0b0b0b"/><text class="s" transform="translate(0 93.7) scale(1.10 1)" x="887.55" y="0" font-size="11.3" fill="#ff0000" stroke="#ff0000" stroke-width="0.3">0</text>
<rect x="971" y="224" width="28" height="11" fill="#0b0b0b"/><text class="s" transform="translate(0 232.7) scale(1.10 1)" x="892.27 900.00" y="0" font-size="11.3" fill="#ff0000" stroke="#ff0000" stroke-width="0.3">5S</text>
<rect x="971" y="362" width="28" height="11" fill="#0b0b0b"/><text class="s" transform="translate(0 370.7) scale(1.10 1)" x="885.91 892.36 900.27" y="0" font-size="11.3" fill="#ff0000" stroke="#ff0000" stroke-width="0.3">10S</text>
<rect x="968" y="501" width="34" height="11" fill="#0b0b0b"/><text class="s" transform="translate(0 509.7) scale(1.10 1)" x="887.73 894.55 902.09" y="0" font-size="11.3" fill="#ff0000" stroke="#ff0000" stroke-width="0.3">15S</text>
<rect x="968" y="640" width="34" height="11" fill="#0b0b0b"/><text class="s" transform="translate(0 648.7) scale(1.10 1)" x="887.27 894.55 902.09" y="0" font-size="11.3" fill="#ff0000" stroke="#ff0000" stroke-width="0.3">20S</text>
<text class="s" x="400.6" y="15.7" font-size="16.5" fill="#fff" textLength="144.2" lengthAdjust="spacingAndGlyphs">0.65um Reflectance</text>
<text class="s" x="368.8" y="33.8" font-size="15.5" fill="#fff" textLength="155" lengthAdjust="spacingAndGlyphs">Aug 01, 2017 18:45 UTC</text>
<text class="s" x="9.3" y="27.4" font-size="11.5" fill="#ffa500" textLength="108.4" lengthAdjust="spacingAndGlyphs">NASA Langley (M04.0)</text>
<rect x="834" y="25" width="26" height="10" fill="#000"/>
<text class="s" transform="translate(0 33.6) scale(1.10 1)" x="127.73 135.00" y="0" font-size="11.3" fill="#ff0000" stroke="#ff0000" stroke-width="0.3">15</text><text class="s" transform="translate(156.2 33.6) scale(0.68 1)" x="0" y="0" font-size="11.3" fill="#ff0000" stroke="#ff0000" stroke-width="0.3">W</text>
<text class="s" transform="translate(0 33.6) scale(1.10 1)" x="252.27 259.55" y="0" font-size="11.3" fill="#ff0000" stroke="#ff0000" stroke-width="0.3">10</text><text class="s" transform="translate(293.2 33.6) scale(0.68 1)" x="0" y="0" font-size="11.3" fill="#ff0000" stroke="#ff0000" stroke-width="0.3">W</text>
<text class="s" transform="translate(0 33.6) scale(1.10 1)" x="386.36" y="0" font-size="11.3" fill="#ff0000" stroke="#ff0000" stroke-width="0.3">5</text><text class="s" transform="translate(432.7 33.6) scale(0.68 1)" x="0" y="0" font-size="11.3" fill="#ff0000" stroke="#ff0000" stroke-width="0.3">W</text>
<text class="s" transform="translate(0 33.6) scale(1.10 1)" x="507.73" y="0" font-size="11.3" fill="#ff0000" stroke="#ff0000" stroke-width="0.3">0</text>
<text class="s" transform="translate(0 33.6) scale(1.10 1)" x="639.45 646.73" y="0" font-size="11.3" fill="#ff0000" stroke="#ff0000" stroke-width="0.3">5E</text>
<text class="s" transform="translate(0 33.6) scale(1.10 1)" x="758.64 765.91 773.18" y="0" font-size="11.3" fill="#ff0000" stroke="#ff0000" stroke-width="0.3">10E</text>
<text class="s" transform="translate(0 33.6) scale(1.10 1)" x="886.82 894.09 901.36" y="0" font-size="11.3" fill="#ff0000" stroke="#ff0000" stroke-width="0.3">15E</text>
<text class="m" x="305.5" y="846.6" font-size="11.5" fill="#e6e6e6" textLength="522" lengthAdjust="spacingAndGlyphs" xml:space="preserve">MT10  0.65UM REFLECTANCE   AUG 01, 2017 18:45Z   NASA LARC</text>
</g></svg></body></html>
